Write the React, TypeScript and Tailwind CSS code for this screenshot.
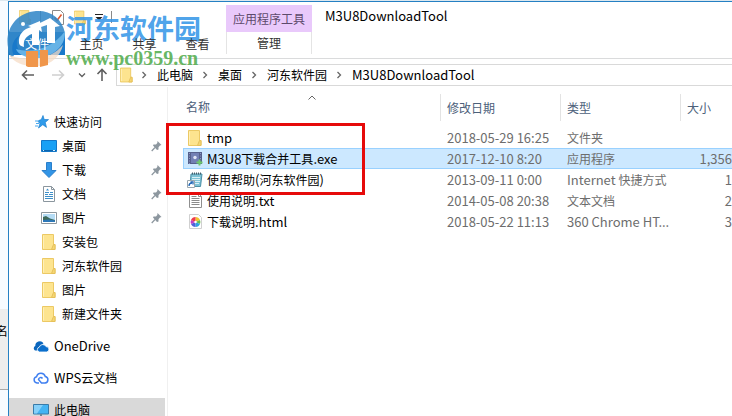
import clsx from 'clsx';
import React, { ReactNode } from 'react';

interface FileItem {
  name: string;
  icon: ReactNode;
  date: string;
  type: string;
  size: string;
  selected?: boolean;
}

interface PlaceItem {
  name: string;
  icon: ReactNode;
  pinned?: boolean;
}

// Latin runs are set one step larger than the Chinese text around them
function Label({ text }: { text: string }) {
  return (
    <>
      {text.split(/([\x21-\x7e][\x20-\x7e]*)/).map((part, i) =>
        i % 2 === 1 ? (
          <span key={i} className="text-[13px]">
            {part}
          </span>
        ) : (
          part
        )
      )}
    </>
  );
}

function FolderIcon({ className = 'h-4 w-[14px]' }: { className?: string }) {
  return (
    <svg viewBox="0 0 14 16" className={className} aria-hidden="true">
      <path d="M.5.5h11v10h1.500v5H.5z" fill="#fde48f" stroke="#ecc964" />
      <path d="M11.500 10.500h1.500v5h-3.500z" fill="#f6d774" stroke="#e6c05a" />
      <path d="M1.500 1.500v13" stroke="#fff0b8" />
    </svg>
  );
}

function StarIcon() {
  return (
    <svg viewBox="0 0 14 14" className="h-[14px] w-[14px]" aria-hidden="true">
      <path
        d="M8 .5l1.200 4 4.300.1-3.300 2.800 1.300 5-3.700-2.700L3.500 13l1.500-4.600L3 6.500 4.500 5 6.200 4.800z"
        fill="#2f9bea"
        stroke="#1d7fd0"
        strokeWidth=".7"
      />
      <path d="M0 6h4M1 8.500h3M0 11h3" stroke="#4aa9ee" />
    </svg>
  );
}

function DesktopIcon() {
  return (
    <svg viewBox="0 0 16 12" className="h-3 w-4" aria-hidden="true">
      <path d="M.5.500h15v11H.5z" fill="#18a0f5" stroke="#1377c8" />
      <path d="M1 10.500h14" stroke="#0d65ad" />
      <path d="M2 10.500h1M12 10.500h2" stroke="#d6efff" />
    </svg>
  );
}

function DownloadIcon() {
  return (
    <svg viewBox="0 0 16 16" className="h-4 w-4" aria-hidden="true">
      <path d="M5.500.5h5v8h4.500L8 15.500 1 8.500h4.500z" fill="#3295e6" stroke="#2a7fcb" />
    </svg>
  );
}

function DocumentIcon() {
  return (
    <svg viewBox="0 0 12 16" className="h-4 w-4" aria-hidden="true">
      <path d="M.5.500h8l3 3v12H.5z" fill="#fff" stroke="#8b969e" />
      <path d="M8.500.5v3h3" fill="none" stroke="#8b969e" />
      <path d="M2 6.500h4M7 6.500h3M2 8.500h3M6 8.500h4M2 10.500h8M2 12.500h8" stroke="#3d8fc9" />
      <path d="M3 4.500L4.500 2.500 6 4.500z" fill="#3d8fc9" />
    </svg>
  );
}

function PictureIcon() {
  return (
    <svg viewBox="0 0 16 12" className="h-3 w-4" aria-hidden="true">
      <path d="M.5.500h15v11H.5z" fill="#fff" stroke="#8d979e" />
      <path d="M2 2h12v8H2z" fill="#b5dcf5" />
      <path d="M2 5l3-1 4 2.500L14 8v2H2z" fill="#3e6a5a" />
      <path d="M2 8l6-.5 6 1V10H2z" fill="#2d78b8" />
    </svg>
  );
}

function OneDriveIcon() {
  return (
    <svg viewBox="0 0 16 11" className="h-[11px] w-4" aria-hidden="true">
      <path d="M2 9.500a2.500 2.500 0 0 1 .3-4.500A4.500 4.500 0 0 1 10.500 2.200L5 7v2.500z" fill="#0b66bd" />
      <path
        d="M6.500 11a2.500 2.500 0 0 1-.2-4.900A3.600 3.600 0 0 1 13 5.600a2.700 2.700 0 0 1 .5 5.400z"
        fill="#0b6fcc"
        stroke="#fff"
        strokeWidth=".8"
      />
    </svg>
  );
}

function WpsCloudIcon() {
  return (
    <svg viewBox="0 0 16 12" className="h-3 w-4" aria-hidden="true">
      <path
        d="M6 11H4A3.200 3.200 0 0 1 3.600 4.700 4.500 4.500 0 0 1 12.300 4.500 3.300 3.300 0 0 1 12 11H8.500L5.500 7.600A2.200 2.200 0 0 1 9.500 6.500"
        fill="none"
        stroke="#3f7ff0"
        strokeWidth="1.500"
      />
    </svg>
  );
}

function ComputerIcon() {
  return (
    <svg viewBox="0 0 16 13" className="h-[13px] w-4" aria-hidden="true">
      <path d="M.5.500h15v9.500H.5z" fill="#45b4f3" stroke="#3a7ba8" />
      <path d="M1 1h9L4 9.500H1z" fill="#86d0f9" />
      <path d="M5 12.500h6" stroke="#6f8796" />
      <path d="M8 10v2" stroke="#6f8796" strokeWidth="2" />
    </svg>
  );
}

function PinIcon() {
  return (
    <svg viewBox="0 0 11 12" className="h-3 w-[11px]" aria-hidden="true">
      <path d="M6.500 1L10.500 5 9 5.500 7.500 7.200 7.500 9.500 6 10 2 5.500 2.500 4.500H5L6.300 3z" fill="#8d979f" />
      <path d="M4 7.500L.7 11" stroke="#8d979f" strokeWidth="1.200" />
    </svg>
  );
}

function ExeIcon() {
  return (
    <svg viewBox="0 0 15 14" className="h-[14px] w-[15px]" aria-hidden="true">
      <path d="M0 0h14v12H0z" fill="#56608c" />
      <path d="M3 1h8v10H3z" fill="#7280b4" />
      <path d="M1.500 1v11M12.500 1v7" stroke="#8f99c4" strokeDasharray="1 1.500" />
      <circle cx="7" cy="5.500" r="1.700" fill="#dfe4f6" />
      <path d="M11.500 7.500v6M8.500 10.500h6" stroke="#6fca6c" strokeWidth="2" />
    </svg>
  );
}

function ShortcutIcon() {
  return (
    <svg viewBox="0 0 16 16" className="h-4 w-4" aria-hidden="true">
      <path d="M4 2h11l-1.500 12.500H3z" fill="#7fc3d6" stroke="#4b8fa6" />
      <path d="M5 1.500h10" stroke="#44606c" strokeWidth="2" strokeDasharray="1 1" />
      <path d="M5 5.500h8M5 7.500h8M8 9.500h5M8 11.500h4" stroke="#d8f0f6" />
      <path d="M.5 8.500h7v7h-7z" fill="#fff" stroke="#9aa6ad" />
      <path d="M2 14c0-2 1-3 3-3M3.500 9.800H6v2.700" fill="none" stroke="#1f66b5" strokeWidth="1.300" />
    </svg>
  );
}

function TextIcon() {
  return (
    <svg viewBox="0 0 13 15" className="h-[15px] w-[13px]" aria-hidden="true">
      <path d="M.5.500h9l3 3v11H.5z" fill="#fff" stroke="#8f8f8f" />
      <path d="M9.500.5v3h3" fill="none" stroke="#8f8f8f" />
      <path d="M2.500 3.500h5M2.500 5.500h8M2.500 7.500h8M2.500 9.500h8M2.500 11.500h8" stroke="#8a8a8a" />
    </svg>
  );
}

function HtmlIcon() {
  return (
    <svg viewBox="0 0 13 15" className="h-[15px] w-[13px]" aria-hidden="true">
      <path d="M.5.500h9l3 3v11H.5z" fill="#fff" stroke="#d0d0d0" />
      <path d="M6.500 8V3A5 5 0 0 1 11 6z" fill="#f2c12e" />
      <path d="M6.500 8L11 6a5 5 0 0 1 0 4z" fill="#6cc04a" />
      <path d="M6.500 8l4.500 2a5 5 0 0 1-4.500 3z" fill="#2fa3e0" />
      <path d="M6.500 8v5A5 5 0 0 1 2 10z" fill="#4d62d8" />
      <path d="M6.500 8L2 10a5 5 0 0 1 0-4z" fill="#c13fc4" />
      <path d="M6.500 8L2 6a5 5 0 0 1 4.500-3z" fill="#ee3b4b" />
      <circle cx="6.500" cy="8" r="1.200" fill="#fff" />
    </svg>
  );
}

function ArrowIcon({ className }: { className?: string }) {
  return (
    <svg viewBox="0 0 14 12" className={clsx('h-3 w-[14px]', className)} aria-hidden="true">
      <path d="M13 6H1.500M6 1.500L1.500 6 6 10.500" fill="none" stroke="currentColor" strokeWidth="1.600" />
    </svg>
  );
}

function Chevron({ className }: { className?: string }) {
  return (
    <svg viewBox="0 0 6 8" className={clsx('h-2 w-[6px]', className)} aria-hidden="true">
      <path d="M1.500 1L4.500 4 1.500 7" fill="none" stroke="currentColor" strokeWidth="1.300" />
    </svg>
  );
}

const tabs = ['主页', '共享', '查看'];
const crumbs = ['此电脑', '桌面', '河东软件园', 'M3U8DownloadTool'];

const quickAccess: PlaceItem[] = [
  { name: '桌面', icon: <DesktopIcon />, pinned: true },
  { name: '下载', icon: <DownloadIcon />, pinned: true },
  { name: '文档', icon: <DocumentIcon />, pinned: true },
  { name: '图片', icon: <PictureIcon />, pinned: true },
  { name: '安装包', icon: <FolderIcon /> },
  { name: '河东软件园', icon: <FolderIcon /> },
  { name: '图片', icon: <FolderIcon /> },
  { name: '新建文件夹', icon: <FolderIcon /> },
];

const files: FileItem[] = [
  { name: 'tmp', icon: <FolderIcon />, date: '2018-05-29 16:25', type: '文件夹', size: '' },
  {
    name: 'M3U8下载合并工具.exe',
    icon: <ExeIcon />,
    date: '2017-12-10 8:20',
    type: '应用程序',
    size: '1,356',
    selected: true,
  },
  {
    name: '使用帮助(河东软件园)',
    icon: <ShortcutIcon />,
    date: '2013-09-11 0:00',
    type: 'Internet 快捷方式',
    size: '1',
  },
  { name: '使用说明.txt', icon: <TextIcon />, date: '2014-05-08 20:38', type: '文本文档', size: '2' },
  { name: '下载说明.html', icon: <HtmlIcon />, date: '2018-05-22 11:13', type: '360 Chrome HT...', size: '3' },
];

function Ribbon() {
  return (
    <header className="flex h-[57px] shrink-0 border-b border-[#dadbdc]">
      <div className="flex w-[217px] shrink-0 flex-col">
        <div className="flex h-[30px] items-center pl-[10px]">
          <FolderIcon className="h-4 w-3" />
          <span className="ml-[9px] h-3 w-px bg-[#8a8a8a]" />
          <button type="button" aria-label="属性" className="ml-[11px]">
            <svg viewBox="0 0 12 15" className="h-[15px] w-3" aria-hidden="true">
              <path d="M.5.500h8l3 3v11H.5z" fill="#fff" stroke="#8a8a8a" />
              <path d="M2.500 7.500L5 10.500 9.500 4.500" fill="none" stroke="#e2562b" strokeWidth="1.600" />
            </svg>
          </button>
          <button type="button" aria-label="新建文件夹" className="ml-[10px]">
            <FolderIcon className="h-[15px] w-3" />
          </button>
          <button type="button" aria-label="自定义快速访问工具栏" className="ml-[9px]">
            <svg viewBox="0 0 8 7" className="h-[7px] w-2" aria-hidden="true">
              <path d="M0 .5h8" stroke="#222" />
              <path d="M.5 3h7L4 6.500z" fill="#222" />
            </svg>
          </button>
          <span className="ml-2 h-3 w-px bg-[#8a8a8a]" />
        </div>
        {/* tab captions stay readable above the watermark */}
        <nav className="flex h-[23px]">
          <button type="button" className="w-14 bg-[#1979ca] text-white">
            <span className="relative z-20">文件</span>
          </button>
          {tabs.map((tab) => (
            <button key={tab} type="button" className="relative z-20 w-[53px] text-[#333]">
              {tab}
            </button>
          ))}
        </nav>
      </div>
      <div className="flex w-[86px] shrink-0 flex-col pt-[3px]">
        <div className="flex h-[27px] items-center justify-center bg-[#e9c9fb] text-[#5d4a6b]">应用程序工具</div>
        <button type="button" className="h-[22px] border-x border-[#e4e4e4] text-[#333]">
          管理
        </button>
      </div>
      <h1 className="ml-[13px] mt-1 text-[13px] leading-5">M3U8DownloadTool</h1>
    </header>
  );
}

function AddressBar() {
  return (
    <div className="flex h-[27px] shrink-0 items-end">
      <div className="flex h-[22px] w-[107px] shrink-0 items-center pl-3 text-[#5f5f5f]">
        <button type="button" aria-label="后退">
          <ArrowIcon />
        </button>
        <button type="button" aria-label="前进" className="ml-4 text-[#cfcfcf]">
          <ArrowIcon className="rotate-180" />
        </button>
        <button type="button" aria-label="最近浏览的位置" className="ml-[14px]">
          <Chevron className="rotate-90" />
        </button>
        <button type="button" aria-label="上移" className="ml-[10px]">
          <ArrowIcon className="rotate-90" />
        </button>
      </div>
      <div className="flex h-[22px] min-w-0 flex-1 items-center border-y border-l border-[#d9d9d9] pl-[3px]">
        <FolderIcon className="mr-2 h-4 w-[13px]" />
        {crumbs.map((crumb) => (
          <React.Fragment key={crumb}>
            <Chevron className="text-[#666]" />
            <button type="button" className="ml-[10px] mr-[9px] whitespace-nowrap">
              <Label text={crumb} />
            </button>
          </React.Fragment>
        ))}
      </div>
    </div>
  );
}

function Sidebar() {
  return (
    <aside className="w-[159px] shrink-0 border-r border-[#f0f0f0] pr-[2px] pt-[23px]">
      <a href="#quick" className="flex h-6 items-center gap-[5px] pl-[26px]">
        <StarIcon />
        快速访问
      </a>
      {quickAccess.map(({ name, icon, pinned }, i) => (
        <a key={i} href="#place" className="flex h-6 items-center gap-[5px] pl-8 pr-[3px]">
          <span className="flex w-4 justify-center">{icon}</span>
          <span className="flex-1">{name}</span>
          {pinned && <PinIcon />}
        </a>
      ))}
      <a href="#onedrive" className="mt-2 flex h-6 items-center gap-[5px] pl-6">
        <OneDriveIcon />
        <Label text="OneDrive" />
      </a>
      <a href="#wps" className="mt-2 flex h-6 items-center gap-[5px] pl-6">
        <WpsCloudIcon />
        <span>
          <Label text="WPS云文档" />
        </span>
      </a>
      <a href="#computer" className="mt-2 flex h-6 items-center gap-[5px] bg-[#d9d9d9] pl-6">
        <ComputerIcon />
        此电脑
      </a>
    </aside>
  );
}

function FileTable() {
  return (
    <main className="relative min-w-0 flex-1 pl-[15px]">
      <table className="w-full table-fixed border-separate border-spacing-0 whitespace-nowrap">
        <thead>
          <tr className="h-10 text-left text-[#4c607a]">
            <th className="relative w-[257px] p-0 pl-[3px] font-normal">
              名称
              <svg
                viewBox="0 0 8 5"
                className="absolute left-1/2 top-2 h-[5px] w-2 -translate-x-1"
                aria-hidden="true"
              >
                <path d="M.5 4.500L4 1l3.500 3.500" fill="none" stroke="#666" />
              </svg>
            </th>
            {['修改日期', '类型', '大小'].map((heading) => (
              <th key={heading} className={clsx('p-0 font-normal', heading !== '大小' && 'w-[120px]')}>
                <div className="h-[27px] border-l border-[#e3e3e3] pl-[6px] leading-[27px]">{heading}</div>
              </th>
            ))}
          </tr>
        </thead>
        <tbody>
          {files.map(({ name, icon, date, type, size, selected }) => {
            const cell = clsx(
              'h-[21px] border-y p-0 leading-[19px]',
              selected ? 'border-[#99d1ff] bg-[#cce8ff]' : 'border-transparent'
            );
            return (
              <tr key={name} className="text-[#6d6d6d]">
                <td className={clsx(cell, 'border-l text-black')}>
                  <div className="flex h-[19px] items-center gap-1 pl-[3px]">
                    <span className="flex w-4 shrink-0 justify-center">{icon}</span>
                    <span>
                      <Label text={name} />
                    </span>
                  </div>
                </td>
                <td className={clsx(cell, 'pl-[7px]')}>
                  <Label text={date} />
                </td>
                <td className={clsx(cell, 'pl-[7px]')}>
                  <Label text={type} />
                </td>
                <td className={clsx(cell, 'text-right')}>
                  <Label text={size} />
                </td>
              </tr>
            );
          })}
        </tbody>
      </table>
      {/* callout around the first three files */}
      <div className="pointer-events-none absolute left-[-2px] top-9 h-[72px] w-[199px] border-[3px] border-[#e60a0a]" />
    </main>
  );
}

function Watermark() {
  return (
    <div className="pointer-events-none absolute left-[6px] top-[10px] z-10 flex">
      <svg viewBox="0 0 60 58" className="h-[58px] w-[60px]" aria-hidden="true">
        <path
          d="M5 47C-5 25 7 3 30 1c14-1 26 7 29 22-4 12-14 20-26 22-10 2-20-1-22-9-1-5 1-9 4-12C7 29 4 37 8 46z"
          fill="#3387c8"
          opacity=".88"
        />
        <path d="M59 21c1 13-9 24-25 27-12 1-22-3-24-9 18 5 38-2 49-18z" fill="#69b5e8" opacity=".95" />
        <path d="M3 45c8 3 16 4 24 4 13-1 23-6 30-14-3 12-12 19-23 21-14 1-25-2-31-11z" fill="#f6dcc6" opacity=".75" />
        <path d="M20 41h12v16H22l-2-1zM34 40h8v15l-8 2z" fill="#f0964a" />
        <path
          d="M13 33c-1-9 5-14 12-16l-3-1 12-5 2 11-3-2v15h-7V24c-6 2-9 6-8 13-3-1-5-2-5-4z"
          fill="#fff"
        />
        <path d="M32 14l12-6 10 8-5 1v16h-8V15l-6 2z" fill="#fff" />
        <circle cx="17" cy="14" r="2" fill="#fff" />
      </svg>
      <div className="font-bold">
        <div className="text-[27px] leading-9 text-[#3797e8]/90">河东软件园</div>
        <div className="mt-[2px] font-['Liberation_Serif'] text-xl leading-5 text-[#54ad50]/90">www.pc0359.cn</div>
      </div>
    </div>
  );
}

export default function App() {
  return (
    <div className="relative flex h-screen overflow-hidden bg-[#dce8ef] pt-px font-['Noto_Sans_CJK_SC',sans-serif] text-xs text-black">
      <div className="flex w-2 shrink-0 flex-col overflow-hidden bg-[#f7fbff]">
        <div className="h-[308px] shrink-0" />
        <div className="flex h-[81px] shrink-0 justify-end border-b border-[#a8a8a8] bg-[#ededed] pt-[14px]">名</div>
      </div>
      <div className="flex min-w-0 flex-1 flex-col border-l border-t border-[#2580c3] bg-white">
        <Ribbon />
        <AddressBar />
        <div className="flex min-h-0 flex-1 pt-px">
          <Sidebar />
          <FileTable />
        </div>
      </div>
      <Watermark />
    </div>
  );
}
